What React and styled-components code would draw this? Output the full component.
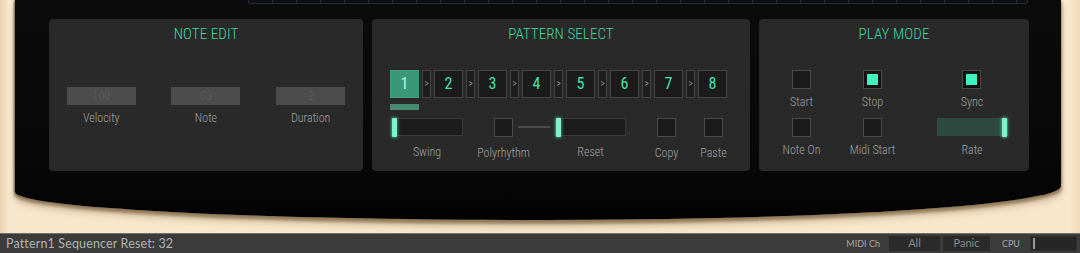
import React from "react";
import styled, { createGlobalStyle } from "styled-components";

const Global = createGlobalStyle`
  html, body { margin: 0; padding: 0; }
  body {
    width: 1080px;
    height: 253px;
    overflow: hidden;
    background: #f6e3c6;
  }
`;

const Page = styled.div`
  width: 1080px;
  height: 253px;
  display: flex;
  flex-direction: column;
  background: linear-gradient(90deg, #e9d2b0 0px, #f8e7cd 9px, #f8e7cd 1070px, #efd9b8 1080px);
`;

const Bezel = styled.div`
  margin: 0 19px 0 15px;
  height: 220px;
  background: linear-gradient(180deg, #0b0b0b 0%, #080808 70%, #020202 100%);
  border-bottom-left-radius: 520px 28px;
  border-bottom-right-radius: 520px 34px;
  box-shadow: -1px 0 2px rgba(90, 70, 45, 0.6), 0 3px 3px 1px rgba(125, 100, 65, 0.7),
    0 7px 6px rgba(165, 138, 100, 0.4);
  display: flex;
  flex-direction: column;
`;

const Display = styled.div`
  margin-left: 233px;
  width: 778px;
  height: 3px;
  border: 1px solid #262c38;
  border-top: none;
  border-radius: 0 0 3px 3px;
  background: repeating-linear-gradient(90deg, #0d1016 0px, #0d1016 23px, #252b36 23px, #252b36 24px);
`;

const PanelRow = styled.div`
  display: flex;
  gap: 9px;
  margin-top: 15px;
  padding-left: 34px;
`;

const Panel = styled.section`
  width: ${(p) => p.$w}px;
  height: 152px;
  background: #292929;
  border-radius: 4px;
  display: flex;
  flex-direction: column;
  align-items: stretch;
  font-family: "Roboto Condensed", "Roboto", sans-serif;
  font-stretch: condensed;
`;

const Title = styled.h2`
  margin: 6px 0 0;
  height: 18px;
  line-height: 18px;
  text-align: center;
  font-size: 15px;
  font-weight: 300;
  color: #3fd7a3;
  letter-spacing: 0.1px;
`;

const Label = styled.span`
  display: block;
  font-size: 12px;
  font-weight: 300;
  line-height: 12px;
  color: #a3a3a3;
  white-space: nowrap;
  text-align: center;
`;

/* NOTE EDIT */
const NoteGrid = styled.div`
  margin-top: 44px;
  display: grid;
  grid-template-columns: repeat(3, 1fr);
  justify-items: center;
`;

const Field = styled.div`
  display: flex;
  flex-direction: column;
  align-items: center;
  gap: 7px;
`;

const ValueBox = styled.div`
  width: 69px;
  height: 18px;
  background: #4c4c4c;
  color: #5e5e5e;
  font-size: 12px;
  font-weight: 300;
  line-height: 18px;
  text-align: center;
`;

/* PATTERN SELECT */
const PatternBody = styled.div`
  margin-top: 27px;
  padding-left: 18px;
  display: flex;
  flex-direction: column;
`;

const StepRow = styled.div`
  display: flex;
  gap: 3px;
  height: 28px;
`;

const StepButton = styled.button`
  flex: none;
  width: 29px;
  height: 28px;
  padding: 0;
  box-sizing: border-box;
  border: 1px solid ${(p) => (p.$active ? "#3f9d7d" : "#454545")};
  background: ${(p) => (p.$active ? "#3a9777" : "#1b1b1b")};
  color: ${(p) => (p.$active ? "#b9f3da" : "#44e2b1")};
  font-family: inherit;
  font-stretch: condensed;
  font-size: 16px;
  font-weight: 400;
  line-height: 26px;
  text-align: center;
`;

const Arrow = styled.div`
  flex: none;
  width: 9px;
  height: 28px;
  box-sizing: border-box;
  border: 1px solid #454545;
  background: #1d1d1d;
  color: #8a8a8a;
  font-size: 10px;
  line-height: 26px;
  text-align: center;
`;

const Indicator = styled.div`
  margin-top: 6px;
  width: 29px;
  height: 6px;
  background: #468a72;
`;

const ControlRow = styled.div`
  margin-top: 8px;
  display: flex;
  align-items: flex-start;
`;

const Control = styled.div`
  width: ${(p) => p.$w}px;
  margin-left: ${(p) => p.$ml || 0}px;
  display: flex;
  flex-direction: column;
  align-items: center;
  gap: ${(p) => (p.$gap != null ? p.$gap : 10)}px;
`;

const Slider = styled.div`
  position: relative;
  width: ${(p) => p.$w}px;
  height: 18px;
  box-sizing: border-box;
  border: 1px solid ${(p) => (p.$tint ? "#2f4b41" : "#393939")};
  background: ${(p) => (p.$tint ? "#2e4a40" : "#1c1c1c")};
`;

const Thumb = styled.div`
  position: absolute;
  top: -1px;
  ${(p) => (p.$right ? "right: 0;" : "left: 0;")}
  width: 5px;
  height: 19px;
  border-radius: 1px;
  background: #7ef2c8;
  box-shadow: 0 0 3px 1px rgba(80, 220, 170, 0.55);
`;

const Check = styled.div`
  width: 19px;
  height: 19px;
  box-sizing: border-box;
  border: 1px solid #4a4a4a;
  background: ${(p) => (p.$on ? "#101010" : "#1b1b1b")};
  padding: 3px;
  &::after {
    content: "";
    display: ${(p) => (p.$on ? "block" : "none")};
    width: 100%;
    height: 100%;
    background: #3ff3bf;
  }
`;

const Link = styled.div`
  width: 32px;
  height: 2px;
  margin-top: 8px;
  background: #4a4a4a;
`;

/* PLAY MODE */
const PlayGrid = styled.div`
  margin-top: 27px;
  display: grid;
  grid-template-columns: 85px 57px 142px;
  grid-template-rows: 48px 40px;
  justify-items: center;
  align-items: start;
`;

/* STATUS BAR */
const Spacer = styled.div`
  flex: 1;
`;

const StatusBar = styled.footer`
  height: 20px;
  box-sizing: border-box;
  border-top: 1px solid #77736c;
  background: #3b3b3b;
  display: flex;
  align-items: center;
  padding: 0 3px 0 6px;
  font-family: "Lato", "DejaVu Sans", sans-serif;
  color: #b3b3b3;
`;

const StatusText = styled.span`
  font-size: 12.5px;
  letter-spacing: 0.15px;
`;

const Small = styled.span`
  font-size: 9px;
  color: #a8a8a8;
  margin-right: ${(p) => p.$mr || 0}px;
`;

const StatusButton = styled.div`
  width: ${(p) => p.$w}px;
  height: 15px;
  background: #2a2a2a;
  color: #8a8a8a;
  font-size: 11px;
  line-height: 14px;
  text-align: center;
  margin-right: ${(p) => p.$mr || 0}px;
`;

const Meter = styled.div`
  width: 47px;
  height: 15px;
  box-sizing: border-box;
  background: #262626;
  border: 1px solid #303030;
  display: flex;
  align-items: center;
  padding-left: 2px;
  &::before {
    content: "";
    width: 2px;
    height: 11px;
    background: #9a9a9a;
  }
`;

export default function App() {
  const steps = [1, 2, 3, 4, 5, 6, 7, 8];
  return (
    <Page>
      <Global />
      <Bezel>
        <Display />
        <PanelRow>
          <Panel $w={314}>
            <Title>NOTE EDIT</Title>
            <NoteGrid>
              <Field>
                <ValueBox>100</ValueBox>
                <Label>Velocity</Label>
              </Field>
              <Field>
                <ValueBox>C3</ValueBox>
                <Label>Note</Label>
              </Field>
              <Field>
                <ValueBox>2</ValueBox>
                <Label>Duration</Label>
              </Field>
            </NoteGrid>
          </Panel>

          <Panel $w={378}>
            <Title>PATTERN SELECT</Title>
            <PatternBody>
              <StepRow>
                {steps.map((n) => (
                  <React.Fragment key={n}>
                    <StepButton $active={n === 1}>{n}</StepButton>
                    {n < 8 && <Arrow>&gt;</Arrow>}
                  </React.Fragment>
                ))}
              </StepRow>
              <Indicator />
              <ControlRow>
                <Control $w={72} $ml={1}>
                  <Slider $w={72}>
                    <Thumb />
                  </Slider>
                  <Label>Swing</Label>
                </Control>
                <Control $w={19} $ml={31}>
                  <Check />
                  <Label>Polyrhythm</Label>
                </Control>
                <Control $w={32} $ml={5}>
                  <Link />
                </Control>
                <Control $w={71} $ml={5}>
                  <Slider $w={71}>
                    <Thumb />
                  </Slider>
                  <Label>Reset</Label>
                </Control>
                <Control $w={19} $ml={31}>
                  <Check />
                  <Label>Copy</Label>
                </Control>
                <Control $w={19} $ml={28}>
                  <Check />
                  <Label>Paste</Label>
                </Control>
              </ControlRow>
            </PatternBody>
          </Panel>

          <Panel $w={270}>
            <Title>PLAY MODE</Title>
            <PlayGrid>
              <Control $gap={7}>
                <Check />
                <Label>Start</Label>
              </Control>
              <Control $gap={7}>
                <Check $on />
                <Label>Stop</Label>
              </Control>
              <Control $gap={7}>
                <Check $on />
                <Label>Sync</Label>
              </Control>
              <Control $gap={7}>
                <Check />
                <Label>Note On</Label>
              </Control>
              <Control $gap={7}>
                <Check />
                <Label>Midi Start</Label>
              </Control>
              <Control $gap={8}>
                <Slider $w={71} $tint>
                  <Thumb $right />
                </Slider>
                <Label>Rate</Label>
              </Control>
            </PlayGrid>
          </Panel>
        </PanelRow>
      </Bezel>
      <Spacer />
      <StatusBar>
        <StatusText>Pattern1 Sequencer Reset: 32</StatusText>
        <Spacer />
        <Small $mr={9}>MIDI Ch</Small>
        <StatusButton $w={51} $mr={3}>All</StatusButton>
        <StatusButton $w={47} $mr={12}>Panic</StatusButton>
        <Small $mr={10}>CPU</Small>
        <Meter />
      </StatusBar>
    </Page>
  );
}
